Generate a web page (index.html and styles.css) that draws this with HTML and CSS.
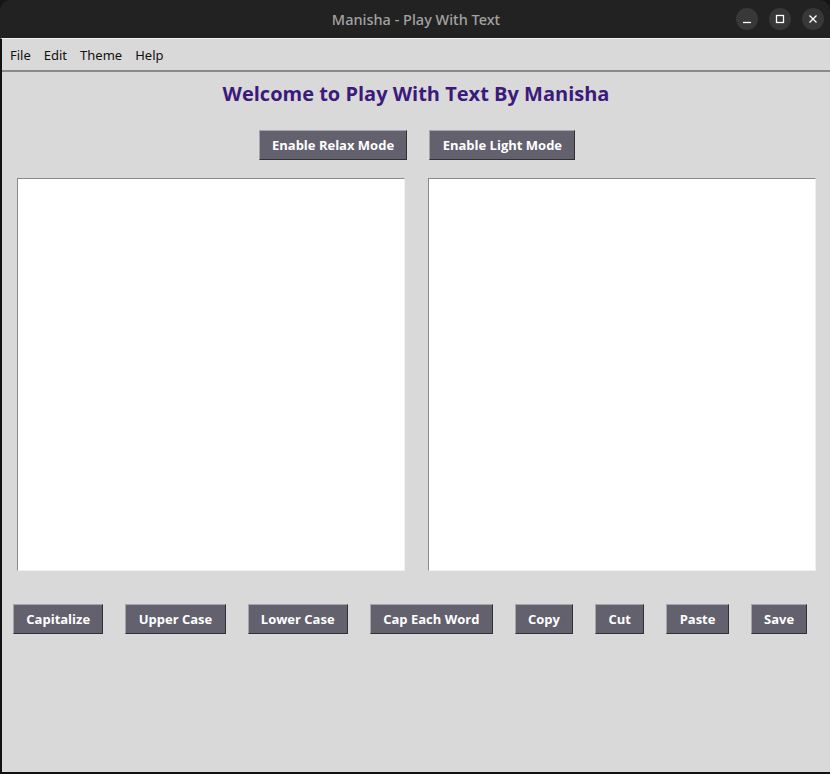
FILE: index.html
```html
<!DOCTYPE html>
<html>
<head>
<meta charset="utf-8">
<link rel="stylesheet" href="styles.css">
</head>
<body>
<div class="window">
  <div class="titlebar">
    <span class="title">Manisha - Play With Text</span>
    <div class="controls">
      <span class="ctl"><svg width="10" height="10" viewBox="0 0 10 10"><path d="M1 8.5H9" stroke="#fff" stroke-width="1.3"/></svg></span>
      <span class="ctl"><svg width="10" height="10" viewBox="0 0 10 10"><rect x="1.5" y="1.5" width="7" height="7" fill="none" stroke="#fff" stroke-width="1.3"/></svg></span>
      <span class="ctl"><svg width="10" height="10" viewBox="0 0 10 10"><path d="M1.5 1.5L8.5 8.5M8.5 1.5L1.5 8.5" stroke="#fff" stroke-width="1.3"/></svg></span>
    </div>
  </div>
  <div class="content">
    <div class="menubar">
      <span class="menu">File</span>
      <span class="menu">Edit</span>
      <span class="menu">Theme</span>
      <span class="menu">Help</span>
    </div>
    <h1 class="heading">Welcome to Play With Text By Manisha</h1>
    <div class="mode-row">
      <button class="btn">Enable Relax Mode</button>
      <button class="btn">Enable Light Mode</button>
    </div>
    <div class="editors">
      <textarea class="editor"></textarea>
      <textarea class="editor"></textarea>
    </div>
    <div class="actions">
      <button class="btn">Capitalize</button>
      <button class="btn">Upper Case</button>
      <button class="btn">Lower Case</button>
      <button class="btn">Cap Each Word</button>
      <button class="btn">Copy</button>
      <button class="btn">Cut</button>
      <button class="btn">Paste</button>
      <button class="btn">Save</button>
    </div>
  </div>
</div>
</body>
</html>
```
FILE: styles.css
```css
* { box-sizing: border-box; }
html, body {
  margin: 0;
  padding: 0;
  background: #151515;
  width: 830px;
  height: 774px;
  overflow: hidden;
}
.window {
  width: 830px;
  height: 774px;
  display: flex;
  flex-direction: column;
}
.titlebar {
  height: 38px;
  background: #222222;
  border-radius: 10px 10px 0 0;
  position: relative;
  display: flex;
  align-items: center;
  justify-content: center;
  flex-shrink: 0;
}
.title {
  font-family: "Noto Sans", sans-serif;
  font-size: 14.5px;
  font-weight: 500;
  color: #a3a3a3;
  margin-left: 2px;
}
.controls {
  position: absolute;
  right: 6px;
  top: 8px;
  display: flex;
  gap: 11px;
}
.ctl {
  width: 22px;
  height: 22px;
  border-radius: 50%;
  background: #383838;
  display: flex;
  align-items: center;
  justify-content: center;
}
.content {
  flex: 1;
  background: #d9d9d9;
  border-left: 2px solid #111;
  border-bottom: 2px solid #111;
  border-top: 1px solid #f2f2f2;
  display: flex;
  flex-direction: column;
}
.menubar {
  height: 33px;
  border-bottom: 2px solid #8a8a8a;
  display: flex;
  align-items: center;
  padding-left: 8px;
  flex-shrink: 0;
}
.menu {
  font-family: "Noto Sans", sans-serif;
  font-size: 13px;
  color: #111;
  margin-right: 13px;
  padding-top: 1px;
}
.heading {
  margin: 8px 0 0 0;
  height: 28px;
  line-height: 28px;
  text-align: center;
  font-family: "Open Sans", "Noto Sans", sans-serif;
  font-weight: 700;
  font-size: 20px;
  color: #3b1a7c;
}
.mode-row {
  margin-top: 22px;
  display: flex;
  justify-content: center;
  gap: 22px;
  padding-left: 2px;
}
.btn {
  flex-shrink: 0;
  white-space: nowrap;
  height: 30px;
  padding: 0 12.3px;
  background: #63616e;
  color: #ffffff;
  font-family: "Open Sans", "Noto Sans", sans-serif;
  font-weight: 700;
  font-size: 13px;
  border: 1px solid;
  border-color: #a6a5ad #2f2f34 #2f2f34 #a6a5ad;
  border-radius: 0;
  margin: 0;
  line-height: 28px;
}
.editors {
  margin-top: 18px;
  display: flex;
  gap: 23px;
  padding-left: 15px;
}
.editor {
  width: 388px;
  height: 393px;
  background: #ffffff;
  border: 1px solid;
  border-color: #8a8a8a #f0f0f0 #f0f0f0 #8a8a8a;
  resize: none;
  margin: 0;
  padding: 0;
  outline: none;
}
.actions {
  margin-top: 33px;
  display: flex;
  gap: 22px;
  padding-left: 11px;
}
```
